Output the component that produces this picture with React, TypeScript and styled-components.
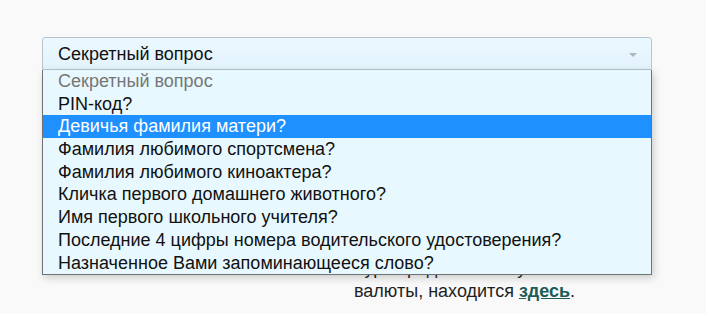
import { useState } from 'react';
import styled, { createGlobalStyle } from 'styled-components';

const GlobalStyle = createGlobalStyle`
  html, body {
    margin: 0;
    padding: 0;
    background: #f9f9f9;
    font-family: 'Liberation Sans', Arial, sans-serif;
  }
`;

const questions = [
  'Секретный вопрос',
  'PIN-код?',
  'Девичья фамилия матери?',
  'Фамилия любимого спортсмена?',
  'Фамилия любимого киноактера?',
  'Кличка первого домашнего животного?',
  'Имя первого школьного учителя?',
  'Последние 4 цифры номера водительского удостоверения?',
  'Назначенное Вами запоминающееся слово?',
];

function App() {
  const [hovered, setHovered] = useState(2);

  return (
    <>
      <GlobalStyle />
      <Page>
        <SelectWrapper>
          <SelectBox>
            <SelectValue>{questions[0]}</SelectValue>
            <Arrow />
          </SelectBox>
          <OptionList>
            {questions.map((q, i) => (
              <Option
                key={q}
                $placeholder={i === 0}
                $active={i === hovered}
                onMouseEnter={() => i > 0 && setHovered(i)}
              >
                {q}
              </Option>
            ))}
          </OptionList>
        </SelectWrapper>
        <Note>
          Курс продажи и покупки
          <br />
          валюты, находится <NoteLink href="#">здесь</NoteLink>.
        </Note>
      </Page>
    </>
  );
}

export default App;

const Page = styled.div`
  padding: 37px 0 0 42px;
`;

const SelectWrapper = styled.div`
  position: relative;
  width: 610px;
`;

const SelectBox = styled.div`
  display: flex;
  align-items: center;
  justify-content: space-between;
  box-sizing: border-box;
  height: 33px;
  padding: 0 14px 0 15px;
  border: 1px solid #b7c4ce;
  border-radius: 3px 3px 0 0;
  background: linear-gradient(#ebf8ff, #e3f3fc);
  color: #111;
  font-size: 18px;
`;

const SelectValue = styled.span`
  line-height: 1;
`;

const Arrow = styled.span`
  width: 0;
  height: 0;
  border-left: 4px solid transparent;
  border-right: 4px solid transparent;
  border-top: 4px solid #b0b6bb;
  margin-top: 2px;
`;

const OptionList = styled.ul`
  position: absolute;
  top: 33px;
  left: 0;
  width: 610px;
  box-sizing: border-box;
  margin: 0;
  padding: 0;
  list-style: none;
  background: #e8f8ff;
  border: 1px solid #6f7376;
  border-top: none;
  box-shadow: 2px 3px 8px rgba(0, 0, 0, 0.18);
  z-index: 2;
`;

const Option = styled.li<{ $placeholder?: boolean; $active?: boolean }>`
  height: 22.7px;
  line-height: 22.7px;
  padding-left: 15px;
  font-size: 18px;
  white-space: nowrap;
  cursor: default;
  color: ${(p) => (p.$active ? '#ffffff' : p.$placeholder ? '#767676' : '#111111')};
  background: ${(p) => (p.$active ? '#1e90ff' : 'transparent')};
`;

const Note = styled.p`
  margin: 187px 0 0 312px;
  font-size: 18px;
  line-height: 23px;
  white-space: nowrap;
  color: #1f1f1f;
`;

const NoteLink = styled.a`
  color: #1b5e58;
  font-weight: bold;
  text-decoration: underline;
`;
